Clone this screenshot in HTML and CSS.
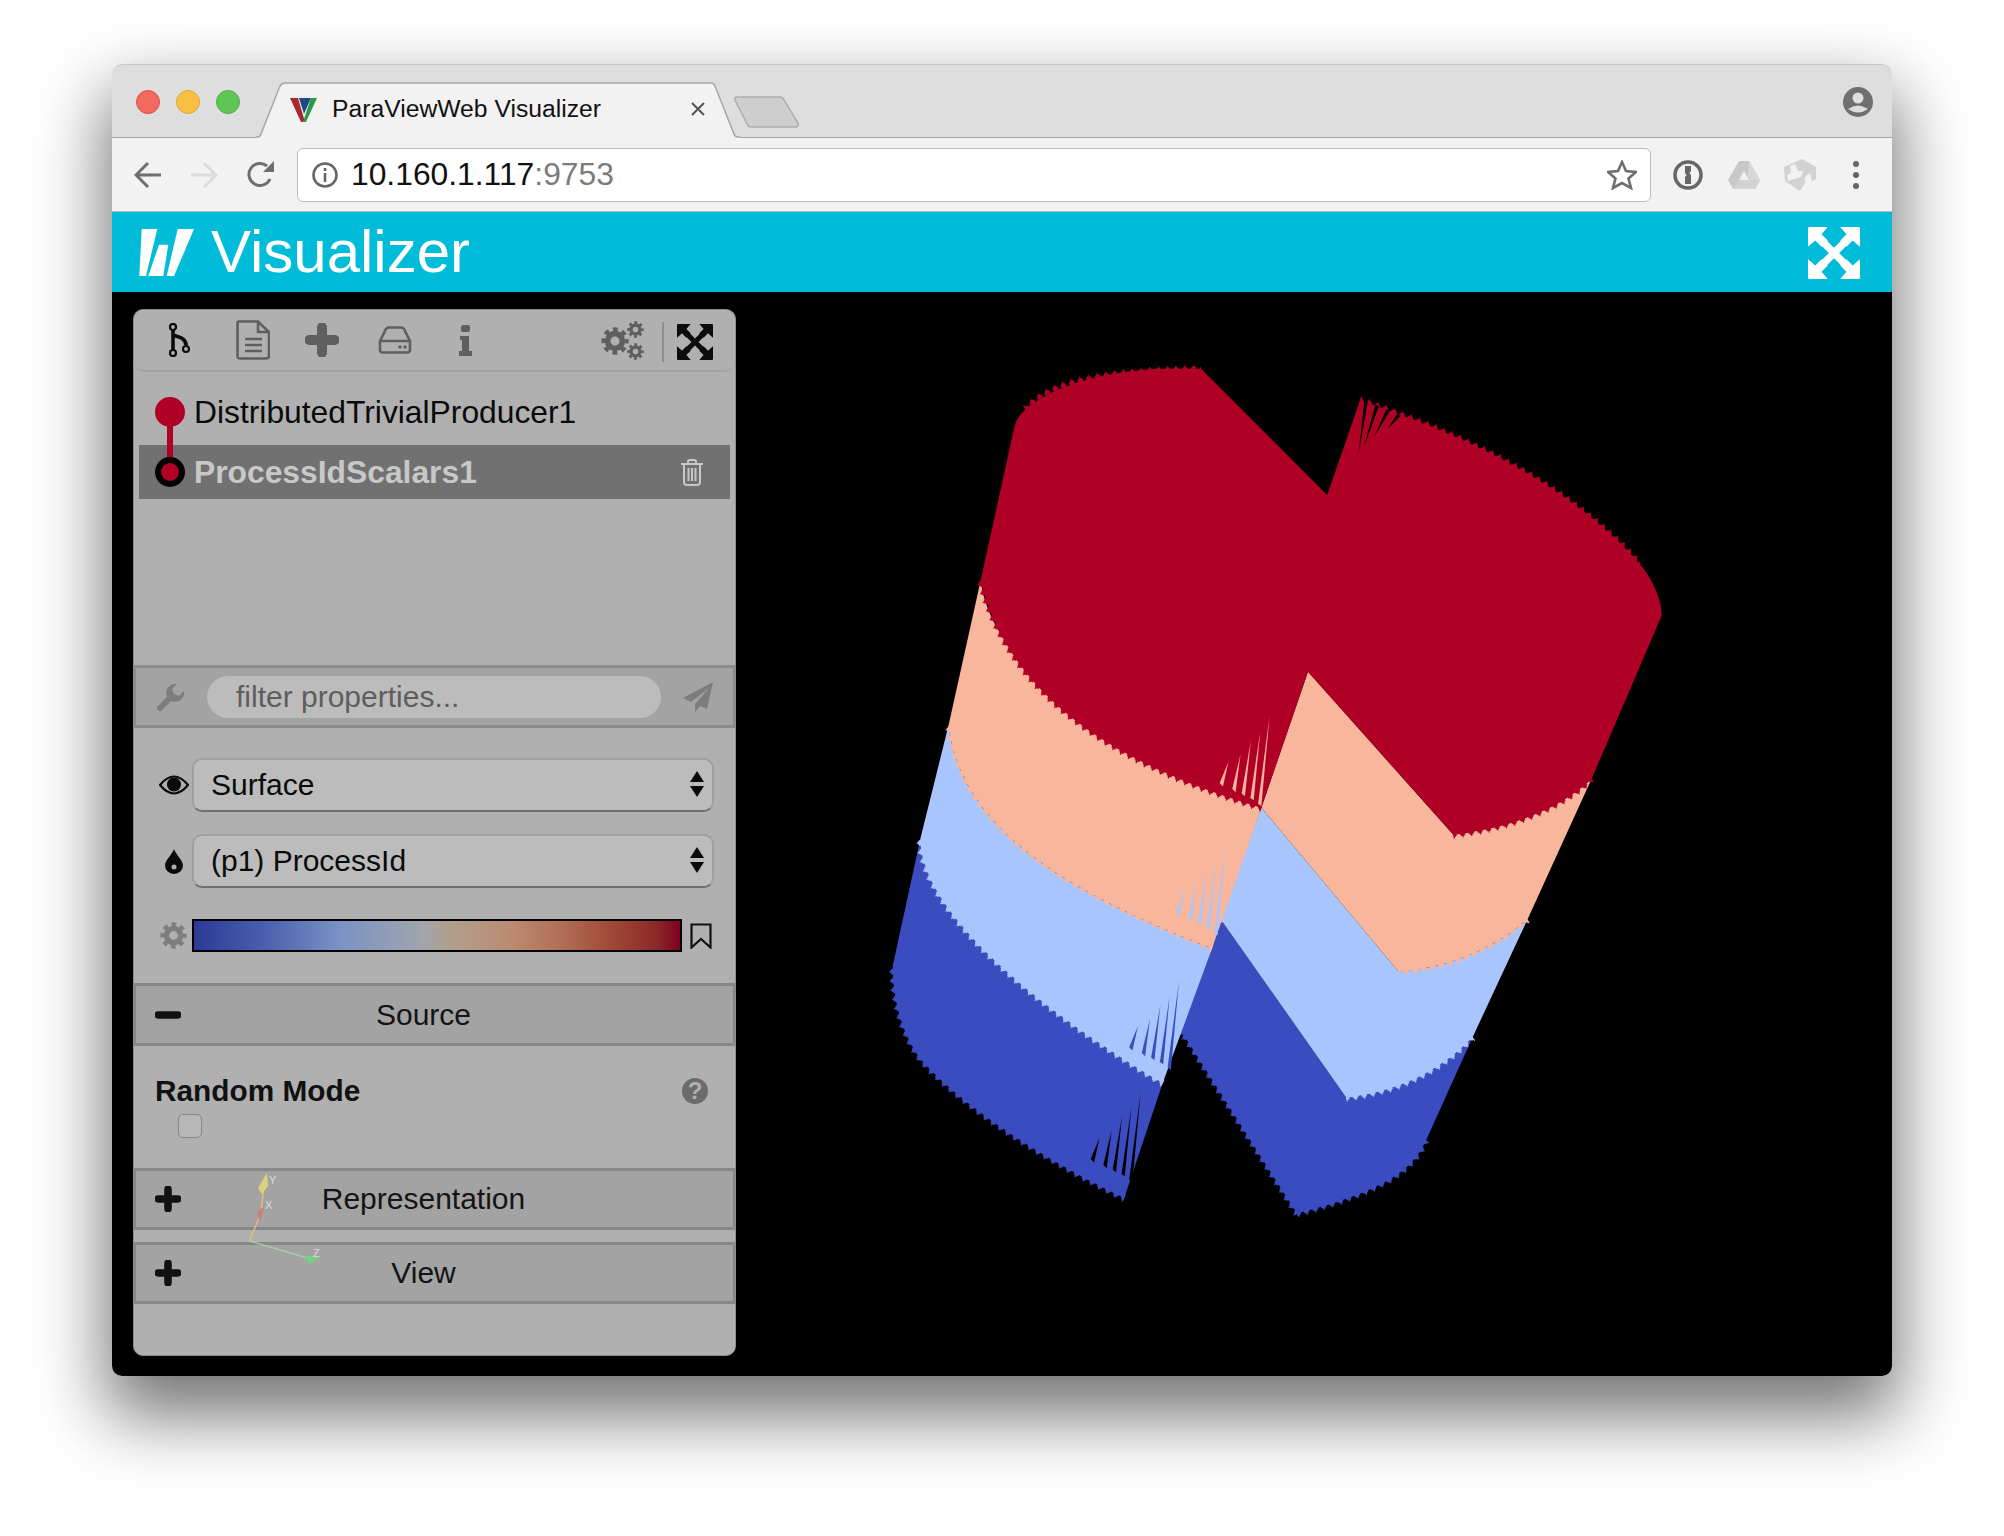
FILE: index.html
```html
<!DOCTYPE html>
<html lang="en">
<head>
<meta charset="utf-8">
<title>ParaViewWeb Visualizer</title>
<link rel="stylesheet" href="styles.css">
</head>
<body>
<svg class="defs" width="0" height="0" aria-hidden="true">
  <defs>
    <symbol id="expand" viewBox="0 0 50 50">
      <path d="M9 9 41 41M41 9 9 41" fill="none" stroke="currentColor" stroke-width="7"/>
      <path d="M1 0H19L13 7 19 13 13 19 7 13 0 19V1ZM31 0H49L50 1V19L43 13 37 19 31 13 37 7ZM0 31 7 37 13 31 19 37 13 43 19 50H1L0 49ZM37 31 43 37 50 31V49L49 50H31L37 43 31 37Z" fill="currentColor"/>
    </symbol>
    <symbol id="gear" viewBox="0 0 40 40">
      <circle cx="20" cy="20" r="10.500" fill="none" stroke="currentColor" stroke-width="8"/>
      <circle cx="20" cy="20" r="16" fill="none" stroke="currentColor" stroke-width="7" stroke-dasharray="6.600 5.970" stroke-dashoffset="3.300"/>
    </symbol>
    <symbol id="plus" viewBox="0 0 24 24">
      <path d="M12 3V21M3 12H21" fill="none" stroke="currentColor" stroke-width="7" stroke-linecap="round"/>
    </symbol>
  </defs>
</svg>
<main class="window">
  <div class="tabstrip">
    <div class="lights"><span class="light red"></span><span class="light amber"></span><span class="light green"></span></div>
    <div class="tab">
      <svg class="tab-shape" viewBox="0 0 484 56" width="484" height="56"><path d="M0 55H2Q4 55 5 52L24 4Q26 1 29 1H455Q458 1 459 4L478 52Q479 55 482 55H484V56H0Z" fill="#f2f2f2"/><path d="M0 55H2Q4 55 5 52L24 4Q26 1 29 1H455Q458 1 459 4L478 52Q479 55 482 55H484" fill="none" stroke="#a6a6a6" stroke-width="1.500"/></svg>
      <svg class="favicon" viewBox="0 0 27 25" width="27" height="25"><polygon points="0,1 8,1 15,25 11,25" fill="#a8282c"/><polygon points="9,1 21,1 14,17" fill="#1d4a84"/><polygon points="27,1 21,1 13,25 16,25" fill="#2a9a48"/></svg>
      <span class="tab-title">ParaViewWeb Visualizer</span>
      <svg class="tab-close" viewBox="0 0 14 14" width="14" height="14"><path d="M1 1 13 13M13 1 1 13" stroke="#555" stroke-width="2"/></svg>
    </div>
    <svg class="newtab" viewBox="0 0 66 32" width="66" height="32"><path d="M3 1H46Q49 1 50 4L64 27Q65 31 61 31H18Q14 31 13 28L1 4Q0 1 3 1Z" fill="#cecece" stroke="#aeaeae" stroke-width="1.500"/></svg>
    <div class="spacer"></div>
    <svg class="profile" viewBox="0 0 30 30" width="30" height="30"><circle cx="15" cy="15" r="15" fill="#6f6f6f"/><circle cx="15" cy="11" r="5.500" fill="#dedede"/><path d="M5 22Q15 15 25 22Q15 29 5 22Z" fill="#dedede"/></svg>
  </div>
  <div class="toolbar">
    <svg class="nav back" viewBox="0 0 28 28" width="28" height="28"><path d="M27 14H3M14 2 2 14 14 26" fill="none" stroke="#6e6e6e" stroke-width="3"/></svg>
    <svg class="nav forward" viewBox="0 0 28 28" width="28" height="28"><path d="M1 14H25M14 2 26 14 14 26" fill="none" stroke="#dcdcdc" stroke-width="3"/></svg>
    <svg class="nav reload" viewBox="0 0 28 28" width="28" height="28"><path d="M23 18A11 11 0 1 1 20 5" fill="none" stroke="#6e6e6e" stroke-width="3"/><polygon points="16,11 27,11 27,0" fill="#6e6e6e"/></svg>
    <div class="omnibox">
      <svg class="info" viewBox="0 0 26 26" width="26" height="26"><circle cx="13" cy="13" r="11.500" fill="none" stroke="#666" stroke-width="2.600"/><path d="M13 11V20M13 6V9" stroke="#666" stroke-width="2.600"/></svg>
      <span class="url">10.160.1.117<span class="port">:9753</span></span>
      <svg class="star" viewBox="0 0 30 30" width="30" height="30"><polygon points="15,2 19,11 29,12 21.500,18.500 24,28 15,23 6,28 8.500,18.500 1,12 11,11" fill="none" stroke="#6e6e6e" stroke-width="2.600"/></svg>
    </div>
    <svg class="ext onepass" viewBox="0 0 30 30" width="30" height="30"><circle cx="15" cy="15" r="13" fill="none" stroke="#666" stroke-width="3.600"/><path d="M12 6H18V11L16.500 13 18 15V24H12V17L13.500 15 12 13Z" fill="#666"/></svg>
    <svg class="ext drive" viewBox="0 0 32 30" width="32" height="30"><polygon points="11,1 21,1 32,20 27,29 5,29 0,20" fill="#c8c8c8"/><polygon points="21,1 32,20 27,29 20,16 " fill="#d8d8d8"/><polygon points="5,29 11,20 32,20 27,29" fill="#d2d2d2"/><polygon points="11,20 21,20 16,11" fill="#f2f2f2"/></svg>
    <svg class="ext puzzle" viewBox="0 0 32 32" width="32" height="32"><polygon points="18,0 32,8 32,20 28,22 26,14 21,18 21,24 16,32 1,22 0,8" fill="#d2d2d2"/><path d="M6 7 11 5 14 12 19 12 17 18 4 22 3 16 7 14Z" fill="#f2f2f2"/></svg>
    <svg class="kebab" viewBox="0 0 8 30" width="8" height="30"><circle cx="4" cy="4" r="3" fill="#666"/><circle cx="4" cy="15" r="3" fill="#666"/><circle cx="4" cy="26" r="3" fill="#666"/></svg>
  </div>
  <header class="appbar">
    <svg class="logo" viewBox="0 0 55 47" width="55" height="47"><polygon points="2.700,0 18.300,0 7,47 0.300,47" fill="#fff"/><polygon points="20,15.700 29.300,15.700 24.300,47 9.300,47" fill="#fff"/><polygon points="38.700,0 55,0 35,47 27.700,47" fill="#fff"/></svg>
    <h1 class="appname">Visualizer</h1>
    <svg class="appbar-expand"><use href="#expand"/></svg>
  </header>
  <div class="stage">
    <svg class="scene" viewBox="0 0 1568 1568" preserveAspectRatio="none">
      <defs>
        <g id="spikes">
          <polygon points="674,772 690,735 680,778"/>
          <polygon points="697,782 712,722 703,788"/>
          <polygon points="714,790 731,698 720,795"/>
          <polygon points="730,798 748,682 736,802"/>
          <polygon points="744,808 765,655 750,812"/>
        </g>
        <g id="edge-dark">
          <path d="M500 1495C380 1440 220 1350 130 1255 95 1210 78 1150 78 1090"/>
          <path d="M1050 1395C1035 1425 1015 1445 980 1465 920 1495 860 1510 815 1522"/>
          <path d="M815 1522 608 1210"/>
        </g>
        <g id="edge-light">
          <path d="M570 1295C350 1170 130 1000 128 870"/>
          <path d="M1135 1215C1070 1280 990 1310 905 1320"/>
        </g>
        <g id="edge-peach">
          <path d="M660 1060C420 970 200 860 180 670"/>
          <path d="M1235 1010C1160 1070 1080 1095 1000 1100"/>
        </g>
        <g id="edge-red">
          <path d="M750 815C560 760 300 660 238 420"/>
          <path d="M1352 765C1290 820 1200 850 1100 862"/>
          <path d="M930 105C1100 160 1300 240 1440 390"/>
          <path d="M320 120C370 70 460 55 640 50"/>
        </g>
      </defs>
      <g class="dark">
        <path d="M128 870C130 1000 350 1170 570 1295L500 1495C380 1440 220 1350 130 1255 95 1210 78 1150 78 1090Z"/>
        <path d="M672 1015H680L905 1320C990 1310 1070 1280 1135 1215L1050 1395C1035 1425 1015 1445 980 1465 920 1495 860 1510 815 1522L608 1210 600 1210Z"/>
        <use href="#edge-dark" class="tooth-a"/><use href="#edge-dark" class="tooth-b"/><use href="#edge-dark" class="tooth-c"/>
      </g>
      <use href="#spikes" transform="translate(-235 655)" fill="#000"/>
      <g class="light">
        <path d="M180 670C200 860 420 970 660 1060L570 1295C350 1170 130 1000 128 870Z"/>
        <path d="M750 815 1000 1100C1080 1095 1160 1070 1235 1010L1135 1215C1070 1280 990 1310 905 1320L680 1015 672 1015Z"/>
        <use href="#edge-light" class="tooth-a"/><use href="#edge-light" class="tooth-b"/><use href="#edge-light" class="tooth-c"/>
      </g>
      <use href="#spikes" transform="translate(-165 460)" fill="#3b4bc0"/>
      <g class="peach">
        <path d="M238 420C260 560 420 680 750 815L660 1060C420 970 200 860 180 670Z"/>
        <path d="M835 578 1100 862C1200 850 1290 820 1352 765L1235 1010C1160 1070 1080 1095 1000 1100L750 815Z"/>
        <use href="#edge-peach" class="tooth-a"/><use href="#edge-peach" class="tooth-b"/><use href="#edge-peach" class="tooth-c"/>
      </g>
      <use href="#spikes" transform="translate(-80 225)" fill="#a9c5fd"/>
      <g class="crimson">
        <path d="M238 420 300 150C310 110 400 60 560 50L640 50 870 270 930 105C1100 160 1300 240 1440 390 1470 425 1480 460 1480 480L1352 765C1290 820 1200 850 1100 862L835 578 750 815C560 760 300 660 238 420Z"/>
        <use href="#edge-red" class="tooth-a"/><use href="#edge-red" class="tooth-b"/><use href="#edge-red" class="tooth-c"/>
      </g>
      <use href="#spikes" fill="#f8b69c"/>
      <g class="top-spikes">
        <polygon points="938,104 944,108 927,200"/>
        <polygon points="958,112 964,116 936,190"/>
        <polygon points="978,120 984,124 955,170"/>
        <polygon points="998,128 1004,132 980,155"/>
      </g>
    </svg>
    <aside class="panel">
      <div class="panel-tools">
        <svg class="tool t-git" viewBox="0 0 23 34" width="23" height="34"><path d="M5 7V27M5 12C12 14 18 16 18 22" fill="none" stroke="#0c0c0c" stroke-width="3.600"/><circle cx="5" cy="4" r="3" fill="none" stroke="#0c0c0c" stroke-width="2.200"/><circle cx="5" cy="30" r="3" fill="none" stroke="#0c0c0c" stroke-width="2.200"/><circle cx="18" cy="26" r="3" fill="none" stroke="#0c0c0c" stroke-width="2.200"/></svg>
        <svg class="tool t-doc" viewBox="0 0 34 40" width="34" height="40"><path d="M3 1.500H22L33 12V36Q33 38.500 30 38.500H4Q1.500 38.500 1.500 36V3Q1.500 1.500 3 1.500ZM22 1.500V12H33" fill="none" stroke="#5f5f5f" stroke-width="2.600"/><path d="M9 19H26M9 25H26M9 31H26" stroke="#5f5f5f" stroke-width="2.600"/></svg>
        <svg class="tool t-plus"><use href="#plus"/></svg>
        <svg class="tool t-drive" viewBox="0 0 34 28" width="34" height="28"><path d="M2 15 8 3Q9 1.500 11 1.500H23Q25 1.500 26 3L32 15V24Q32 26.500 29 26.500H5Q2 26.500 2 24ZM2 15H32" fill="none" stroke="#5f5f5f" stroke-width="2.600"/><circle cx="22" cy="21" r="1.700" fill="#5f5f5f"/><circle cx="27" cy="21" r="1.700" fill="#5f5f5f"/></svg>
        <svg class="tool t-info" viewBox="0 0 13 31" width="13" height="31"><rect x="2" y="0" width="9" height="7" rx="2" fill="#5f5f5f"/><path d="M1 11H10V26H13V31H0V26H3V15H1Z" fill="#5f5f5f"/></svg>
        <div class="spacer"></div>
        <svg class="tool t-gears" viewBox="0 0 43 39" width="43" height="39"><use href="#gear" x="0" y="6" width="28" height="28"/><use href="#gear" x="26" y="0" width="17" height="17"/><use href="#gear" x="26" y="22" width="17" height="17"/></svg>
        <span class="tool-sep"></span>
        <svg class="tool t-expand"><use href="#expand"/></svg>
      </div>
      <div class="tree">
        <svg class="tree-graph" viewBox="0 0 30 90" width="30" height="90"><rect x="12" y="15" width="6" height="60" fill="#b00026"/><circle cx="15" cy="15" r="15" fill="#b00026"/><circle cx="15" cy="75" r="15" fill="#000"/><circle cx="15" cy="75" r="9" fill="#b00026"/></svg>
        <div class="tree-row">DistributedTrivialProducer1</div>
        <div class="tree-row selected">
          <span>ProcessIdScalars1</span>
          <svg class="trash" viewBox="0 0 24 27" width="24" height="27"><path d="M1 5H23M8 5V2.500Q8 1 10 1H14Q16 1 16 2.500V5M4 5V23Q4 26 7 26H17Q20 26 20 23V5M8.500 9V22M12 9V22M15.500 9V22" fill="none" stroke="#c8c8c8" stroke-width="2"/></svg>
        </div>
      </div>
      <div class="filterbar">
        <svg class="wrench" viewBox="0 0 28 28" width="28" height="28"><path d="M3 25 15 13" stroke="#7d7d7d" stroke-width="6" stroke-linecap="round" fill="none"/><path d="M27 8A9 9 0 1 1 20 1L15 6 17 11 22 13Z" fill="#7d7d7d"/></svg>
        <div class="filter-input">filter properties...</div>
        <svg class="send" viewBox="0 0 30 30" width="30" height="30"><path d="M30 0 0 16 8 20 26 6 12 22V30L17 24 24 27Z" fill="#7d7d7d"/></svg>
      </div>
      <div class="controls">
        <div class="control-row">
          <span class="control-icon"><svg viewBox="0 0 30 20" width="30" height="20"><path d="M1 10Q15 -7 29 10Q15 27 1 10Z" fill="none" stroke="#0a0a0a" stroke-width="2.200"/><circle cx="15" cy="9.500" r="7" fill="#0a0a0a"/></svg></span>
          <div class="select"><span>Surface</span><span class="arrows"></span></div>
        </div>
        <div class="control-row">
          <span class="control-icon"><svg viewBox="0 0 18 25" width="18" height="25"><path d="M9 0C11 6 18 11 18 16.500A9 8.500 0 0 1 0 16.500C0 11 7 6 9 0Z" fill="#0a0a0a"/><circle cx="9" cy="18" r="2.500" fill="#b0b0b0"/></svg></span>
          <div class="select"><span>(p1) ProcessId</span><span class="arrows"></span></div>
        </div>
        <div class="control-row bar-row">
          <span class="control-icon"><svg class="cmap-gear"><use href="#gear"/></svg></span>
          <div class="colorbar"></div>
          <svg class="bookmark" viewBox="0 0 22 26" width="22" height="26"><path d="M1.500 1.500H20.500V24.500L11 16 1.500 24.500Z" fill="none" stroke="#111" stroke-width="2.200"/></svg>
        </div>
      </div>
      <div class="section-head source"><svg class="sign" viewBox="0 0 24 24"><path d="M3 12H21" stroke="#111" stroke-width="7" stroke-linecap="round"/></svg><span class="section-title">Source</span></div>
      <div class="property">
        <div class="prop-head"><span class="prop-name">Random Mode</span>
          <svg class="help" viewBox="0 0 26 26" width="26" height="26"><circle cx="13" cy="13" r="13" fill="#6b6b6b"/><text x="13" y="21" class="help-mark">?</text></svg></div>
        <span class="checkbox"></span>
      </div>
      <div class="section-head"><svg class="sign"><use href="#plus"/></svg><span class="section-title">Representation</span></div>
      <div class="section-head view"><svg class="sign"><use href="#plus"/></svg><span class="section-title">View</span></div>
    </aside>
    <svg class="axes" viewBox="0 0 90 100" width="90" height="100">
      <path d="M9.500 75 21 47 25 10" fill="none" stroke="#e8c57a" stroke-width="1.400"/>
      <path d="M9.500 75 71 93" fill="none" stroke="#a6dba6" stroke-width="1.400"/>
      <polygon points="27,7 18,22 22,28 28,20" fill="#e9df6d"/>
      <polygon points="24,40 17,47 20,56" fill="#dd7272"/>
      <polygon points="64,89 81,92 69,98" fill="#72d87a"/>
      <text x="29" y="18" class="axis-letter">Y</text>
      <text x="25" y="43" class="axis-letter">X</text>
      <text x="73" y="91" class="axis-letter">Z</text>
    </svg>
  </div>
</main>
</body>
</html>
```
FILE: styles.css
```css
* { box-sizing: border-box; }
html, body { margin: 0; height: 100%; }
body {
  background: #fff;
  font-family: "Liberation Sans", Arial, sans-serif;
  padding: 64px 112px 160px;
  overflow: hidden;
}
.defs { position: absolute; }
.window {
  width: 1780px;
  height: 1312px;
  display: flex;
  flex-direction: column;
  border-radius: 10px;
  overflow: hidden;
  box-shadow: 0 34px 70px 6px rgba(0, 0, 0, .55);
}
.spacer { flex: 1; }

/* browser chrome */
.tabstrip {
  height: 74px;
  flex: none;
  display: flex;
  background: #dedede;
  border-bottom: 1px solid #a6a6a6;
  border-radius: 10px 10px 0 0;
  box-shadow: inset 0 1px 0 #c6c6c6;
}
.lights { display: flex; gap: 16px; padding: 26px 0 0 24px; }
.light { width: 24px; height: 24px; border-radius: 50%; }
.light.red { background: #f2695f; border: 1px solid #dc5047; }
.light.amber { background: #f9bf45; border: 1px solid #dea638; }
.light.green { background: #5fc655; border: 1px solid #4bad43; }
.tab {
  position: relative;
  width: 484px;
  height: 56px;
  margin: 18px 0 -1px 16px;
  display: flex;
  align-items: center;
  padding: 0 35px 2px 34px;
}
.tab-shape { position: absolute; left: 0; top: 0; }
.favicon, .tab-title, .tab-close { position: relative; }
.tab-title { margin-left: 15px; font-size: 24.700px; color: #111; flex: 1; white-space: nowrap; }
.newtab { margin: 32px 0 0 -6px; }
.profile { margin: 23px 19px 0 0; }
.toolbar {
  height: 74px;
  flex: none;
  display: flex;
  align-items: center;
  background: #f2f2f2;
  border-bottom: 1px solid #bdbdbd;
  padding: 0 0 0 22px;
}
.nav.forward { margin-left: 28px; }
.nav.reload { margin-left: 29px; }
.omnibox {
  width: 1354px;
  height: 54px;
  margin-left: 22px;
  display: flex;
  align-items: center;
  background: #fff;
  border: 1.500px solid #bcbcbc;
  border-radius: 6px;
  padding: 0 13px 0 14px;
}
.url { flex: 1; margin-left: 13px; font-size: 31.800px; color: #111; }
.port { color: #7c7c7c; }
.ext.onepass { margin-left: 22px; }
.ext.drive { margin-left: 25px; }
.ext.puzzle { margin-left: 24px; }
.kebab { margin-left: 36px; }

/* application bar */
.appbar {
  height: 80px;
  flex: none;
  display: flex;
  align-items: center;
  background: #00bcd8;
  padding: 0 32px 0 27px;
}
.appname { flex: 1; margin: 0 0 0 17px; font-size: 60px; line-height: 1; font-weight: 400; color: #fff; }
.appbar-expand { width: 52px; height: 52px; margin-top: 1px; color: #fff; }

/* render view */
.stage { position: relative; flex: 1; background: #000; }
.scene { position: absolute; left: 738px; top: 48px; width: 860px; height: 900px; }
.dark { fill: #3b4bc0; stroke: #3b4bc0; stroke-width: 0; }
.light { fill: #a9c5fd; stroke: #a9c5fd; stroke-width: 0; }
.peach { fill: #f8b69c; stroke: #f8b69c; stroke-width: 0; }
.crimson { fill: #b00026; stroke: #b00026; stroke-width: 0; }
.scene use[class^="tooth"] { fill: none; }
.tooth-a { stroke-width: 14px; stroke-dasharray: 2 14; }
.tooth-b { stroke-width: 9px; stroke-dasharray: 6 10; stroke-dashoffset: 2; }
.tooth-c { stroke-width: 5px; stroke-dasharray: 10 6; stroke-dashoffset: 4; }
.top-spikes { fill: #000; }

/* side panel */
.panel {
  position: absolute;
  left: 21px;
  top: 17px;
  width: 603px;
  height: 1047px;
  display: flex;
  flex-direction: column;
  background: #b0b0b0;
  border: 1.500px solid #8e8e8e;
  border-radius: 10px;
  color: #0a0a0a;
}
.panel-tools {
  height: 62px;
  flex: none;
  display: flex;
  align-items: center;
  padding: 0 22px 0 34px;
  border-bottom: 2px solid #a2a2a2;
  border-radius: 0 0 10px 10px;
}
.tool { flex: none; }
.t-doc { margin-left: 45px; }
.t-plus { width: 34px; height: 34px; margin-left: 35px; color: #5f5f5f; }
.t-drive { margin-left: 39px; }
.t-gears { color: #5f5f5f; }
.t-info { margin-left: 47px; }
.tool-sep { width: 2px; height: 40px; margin: 4px 13px 0 18px; background: #8e8e8e; }
.t-expand { width: 36px; height: 36px; margin-top: 4px; color: #0c0c0c; }
.tree { position: relative; height: 293px; flex: none; padding: 10px 5px 0 5px; }
.tree-graph { position: absolute; left: 21px; top: 25px; z-index: 1; }
.tree-row {
  height: 60px;
  display: flex;
  align-items: center;
  padding-left: 55px;
  font-size: 31.800px;
}
.tree-row.selected {
  height: 54px;
  margin-top: 3px;
  background: #717171;
  color: #c8c8c8;
  font-weight: 700;
  padding-right: 26px;
  justify-content: space-between;
}
.filterbar {
  height: 63px;
  flex: none;
  display: flex;
  align-items: center;
  background: #a3a3a3;
  border: 3px solid #8c8c8c;
  border-width: 3px 2px;
  padding: 0 20px 0 21px;
}
.filter-input {
  flex: 1;
  height: 42px;
  margin: 0 22px;
  padding-left: 29px;
  display: flex;
  align-items: center;
  background: #bcbcbc;
  border-radius: 21px;
  font-size: 30px;
  color: #5e5e5e;
}
.controls {
  height: 255px;
  flex: none;
  padding: 30px 21px 0 0;
  display: flex;
  flex-direction: column;
  gap: 22px;
}
.control-row { display: flex; align-items: center; }
.control-icon { width: 58px; padding-left: 21px; display: flex; justify-content: center; flex: none; }
.select {
  flex: 1;
  height: 54px;
  display: flex;
  align-items: center;
  justify-content: space-between;
  background: #bcbcbc;
  border: 2px solid #a0a0a0;
  border-bottom: 2.500px solid #6f6f6f;
  border-radius: 10px;
  padding: 0 8px 0 17px;
  font-size: 30px;
}
.arrows { position: relative; width: 14px; height: 26px; margin-top: -2px; }
.arrows::before, .arrows::after {
  content: "";
  position: absolute;
  left: 0;
  border-left: 7px solid transparent;
  border-right: 7px solid transparent;
}
.arrows::before { top: 0; border-bottom: 11px solid #0a0a0a; }
.arrows::after { bottom: 0; border-top: 11px solid #0a0a0a; }
.bar-row { margin-top: 9px; }
.cmap-gear { width: 27px; height: 27px; color: #7e7e7e; }
.colorbar {
  width: 490px;
  height: 33px;
  flex: none;
  border: 2.500px solid #000;
  background: linear-gradient(90deg, #2b3a96 0%, #4a61ae 15%, #7a93c4 30%, #a0a5ae 47%, #b0a090 52%, #bb8c72 65%, #b27058 75%, #a24c38 85%, #8c2a2a 95%, #7f001c 100%);
}
.bookmark { margin-left: 8px; }
.section-head {
  position: relative;
  height: 62px;
  flex: none;
  display: flex;
  align-items: center;
  background: #a3a3a3;
  border: 3px solid #878787;
  border-width: 3px 2px;
  font-size: 30px;
  color: #141414;
}
.section-head.source { height: 63px; }
.section-head.view { margin-top: 12px; }
.sign { position: absolute; left: 19px; top: 50%; width: 26px; height: 26px; margin-top: -13px; color: #111; }
.section-title { flex: 1; text-align: center; padding-right: 22px; }
.property { height: 122px; flex: none; padding: 30px 27px 0 21px; }
.prop-head { display: flex; align-items: center; justify-content: space-between; height: 30px; }
.prop-name { font-size: 29.800px; font-weight: 700; color: #111; }
.help-mark { font: 700 24px "Liberation Sans", Arial, sans-serif; fill: #b0b0b0; text-anchor: middle; }
.checkbox {
  display: block;
  width: 24px;
  height: 24px;
  margin: 8px 0 0 23px;
  background: #b8b8b8;
  border: 1.500px solid #868686;
  border-radius: 5px;
}
.axes { position: absolute; left: 128px; top: 874px; opacity: .8; }
.axis-letter { font: 11px "Liberation Sans", Arial, sans-serif; fill: #e8e8e8; }
```
